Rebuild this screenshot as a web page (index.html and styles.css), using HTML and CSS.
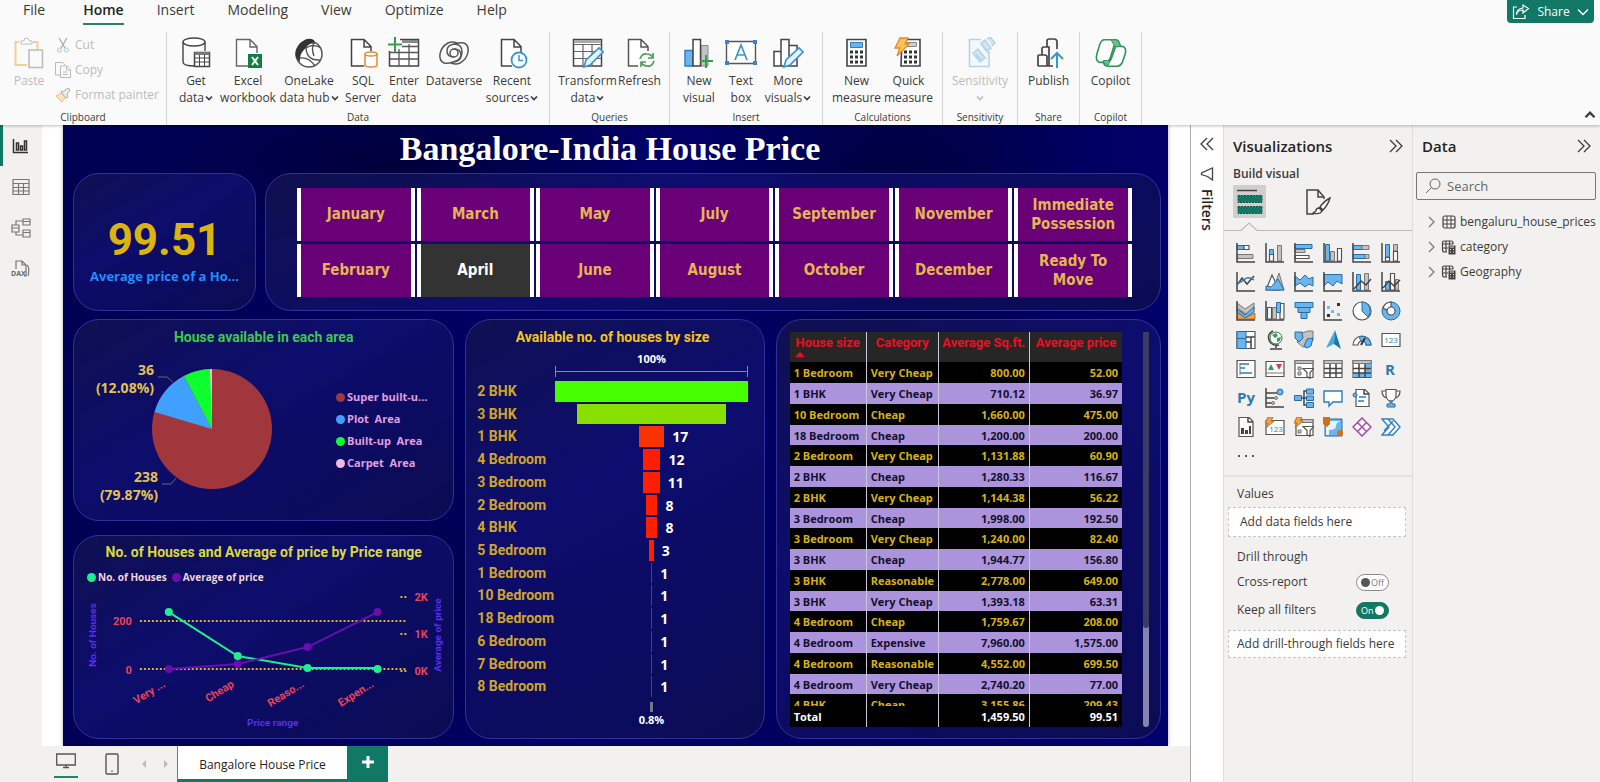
FILE: index.html
```html
<!DOCTYPE html>
<html lang="en">
<head>
<meta charset="utf-8">
<title>Bangalore House Price</title>
<link rel="stylesheet" href="styles.css">
</head>
<body>
<svg class="defs" aria-hidden="true">
  <symbol id="down" viewBox="0 0 8 8"><path d="M1 2.500 4 5.500 7 2.500" fill="none" stroke="currentColor" stroke-width="1.600"/></symbol>
  <symbol id="next" viewBox="0 0 16 16"><path d="M2 2l6 6-6 6M8 2l6 6-6 6" fill="none" stroke="currentColor" stroke-width="1.300"/></symbol>
  <symbol id="right" viewBox="0 0 12 12"><path d="M3 1l5 5-5 5" fill="none" stroke="currentColor" stroke-width="1.200"/></symbol>
  <symbol id="calcgrid" viewBox="0 0 16 16"><path d="M6 13H3.500Q1.500 13 1.500 11V4Q1.500 2 3.500 2H10Q12 2 12 4V5M1.500 5H12M1.500 9H7M5 2V13M8.500 2V6" fill="none" stroke="#444" stroke-width="1.200"/><path d="M7.500 6.500h7v9h-7z" fill="#444"/><path d="M9 8h4M9 10.500h1M12 10.500h1M9 13h1M12 13h1" stroke="#ddd"/></symbol>
</svg>

<header class="ribbon">
  <nav class="tabs">
    <button class="tab">File</button>
    <button class="tab active">Home</button>
    <button class="tab">Insert</button>
    <button class="tab">Modeling</button>
    <button class="tab">View</button>
    <button class="tab">Optimize</button>
    <button class="tab">Help</button>
    <button class="share"><svg width="18" height="16" viewBox="0 0 18 16"><path d="M5 3H1.500V14.500H13V11M4.500 11Q5 6 11 6V9l5.500-4.500L11 1V4Q4.500 4.500 4.500 11Z" fill="none" stroke="#fff" stroke-width="1.200"/></svg>Share<svg width="12" height="12" viewBox="0 0 12 12"><path d="M1 3.500l5 5 5-5" fill="none" stroke="#fff" stroke-width="1.300"/></svg></button>
  </nav>
  <div class="tools">
    <section class="group clipboard">
      <div class="items">
        <button class="tool paste" disabled><svg class="big" viewBox="0 0 32 32"><path d="M6 5H2.500V28H14M20 5h4.500V12" fill="none" stroke="#f3cf97" stroke-width="2"/><path d="M8 7V4h3q0-3 2.500-3T16 4h3V7Z" fill="#fff" stroke="#bbb"/><path d="M16 13H29.500V30.500H16Z" fill="#fafafa" stroke="#bbb" stroke-width="1.500"/></svg><span>Paste</span></button>
        <div class="clips">
          <button disabled><svg width="16" height="16" viewBox="0 0 16 16"><path d="M4 1l6 10M12 1L6 11" stroke="#aaa" stroke-width="1.300"/><circle cx="4.500" cy="13" r="2" fill="none" stroke="#a5c8e0"/><circle cx="11.500" cy="13" r="2" fill="none" stroke="#a5c8e0"/></svg>Cut</button>
          <button disabled><svg width="16" height="16" viewBox="0 0 16 16"><path d="M5 13H.5V.5H8L10 3M5.500 4H12l3.500 3.500V15.500H5.500ZM11.500 4V8h4M8 10h4M8 12.500h5" fill="none" stroke="#bbb"/></svg>Copy</button>
          <button disabled><svg width="16" height="16" viewBox="0 0 16 16"><path d="M1 9l6-3 4 4-4 5Z" fill="#fbe3c0" stroke="#eac28a"/><path d="M6 5l5 6 2-1-1-3 3-4-2-2-4 3Z" fill="#eee" stroke="#aaa"/></svg>Format painter</button>
        </div>
      </div>
      <h2>Clipboard</h2>
    </section>
    <section class="group data">
      <div class="items">
        <button class="tool w50"><svg class="big" viewBox="0 0 32 32"><path d="M3 5V25q0 4 12 4M25 5v9" fill="none" stroke="#444" stroke-width="1.400"/><ellipse cx="14" cy="5" rx="11" ry="4" fill="#fff" stroke="#444" stroke-width="1.400"/><path d="M14.500 15.500h15v14h-15z" fill="#fff" stroke="#444" stroke-width="1.500"/><path d="M14.500 16.500h15" stroke="#777" stroke-width="3"/><path d="M14.500 21h15M14.500 25h15M19.500 18v11M24.500 18v11" stroke="#444"/></svg><span>Get<br>data<svg class="dd"><use href="#down"/></svg></span></button>
        <button class="tool w54"><svg class="big" viewBox="0 0 32 32"><path d="M16 29H4.500V2.500H18L25 9.500V16M18 2.500V10h7" fill="#fff" stroke="#666" stroke-width="1.400"/><rect x="16" y="17" width="14" height="14" fill="#138043"/><path d="M20 20l6 8M26 20l-6 8" stroke="#fff" stroke-width="2"/></svg><span>Excel<br>workbook</span></button>
        <button class="tool w68"><svg class="big" viewBox="0 0 32 32"><circle cx="16" cy="17" r="13" fill="#fff" stroke="#555" stroke-width="1.500"/><path d="M10 4Q15 0 21 3L22 7Q16 5 13 11 6 16 7 25-1 18 5 10 6 6 10 4Z" fill="#333"/><path d="M13 11Q14 24 27 23M13 11Q20 6 28 11M7 21Q16 20 22 29M21 5Q18 12 21 19" fill="none" stroke="#555" stroke-width="1.400"/></svg><span>OneLake<br>data hub<svg class="dd"><use href="#down"/></svg></span></button>
        <button class="tool w40"><svg class="big" viewBox="0 0 32 32"><path d="M17 29H4.500V2.500H17L24 9.500V14M17 2.500V10h7" fill="#fff" stroke="#444" stroke-width="1.500"/><path d="M18 17V28q0 2 6 2t6-2V17" fill="#fff" stroke="#e28a3b" stroke-width="1.500"/><ellipse cx="24" cy="17" rx="6" ry="2" fill="#fff" stroke="#e28a3b" stroke-width="1.500"/></svg><span>SQL<br>Server</span></button>
        <button class="tool w42"><svg class="big" viewBox="0 0 32 32"><path d="M12 2.500H30.500V29H1.500V14" fill="#fff" stroke="#444" stroke-width="1.500"/><path d="M14 4.500h16" stroke="#888" stroke-width="3"/><path d="M14 9.500h17M10 15.500h21M2 22h29M11 12v17M21 7v22M2 15.500h9" stroke="#555" stroke-width="1.300"/><path d="M7 0V15M0 7.500H14" stroke="#35a04c" stroke-width="2"/></svg><span>Enter<br>data</span></button>
        <button class="tool w58"><svg class="big" viewBox="0 0 32 32"><g fill="none" stroke="#555" stroke-width="1.500"><circle cx="16" cy="16" r="4"/><path d="M16 20Q9 20 9 14T16 7Q24 7 24 15T15 25Q10 27 6 26 1 24 2 17T10 6Q14 4 19 6"/><path d="M16 12Q23 12 23 18T16 25M17 7Q22 5 26 6 31 8 30 15T22 26Q18 28 13 26"/></g></svg><span>Dataverse</span></button>
        <button class="tool w58"><svg class="big" viewBox="0 0 32 32"><path d="M16 29H5.500V2.500H18L25 9.500V15M18 2.500V10h7" fill="#fff" stroke="#444" stroke-width="1.500"/><circle cx="23" cy="23" r="7.500" fill="#fff" stroke="#3c94d4" stroke-width="1.800"/><path d="M23 18V23.500h4" fill="none" stroke="#3c94d4" stroke-width="1.500"/></svg><span>Recent<br>sources<svg class="dd"><use href="#down"/></svg></span></button>
      </div>
      <h2>Data</h2>
    </section>
    <section class="group g120">
      <div class="items">
        <button class="tool w60"><svg class="big" viewBox="0 0 32 32"><path d="M1.500 2.500H29.500V29H1.500Z" fill="#fff" stroke="#444" stroke-width="1.500"/><path d="M2 4.500h27" stroke="#aaa" stroke-width="3"/><path d="M1.500 7.500h28M2 14.500h27M2 21.500h27M11 8v21M20 8v21" stroke="#666" stroke-width="1.200"/><path d="M12 30l2-7L27 11l4 4-13 13Z" fill="#e7f3fc" stroke="#3c94d4" stroke-width="1.700"/></svg><span>Transform<br>data<svg class="dd"><use href="#down"/></svg></span></button>
        <button class="tool w44"><svg class="big" viewBox="0 0 32 32"><path d="M14 29H4.500V2.500H17L24 9.500V14M17 2.500V10h7" fill="#fff" stroke="#555" stroke-width="1.500"/><path d="M16 22q2-6 7-5 4 0 6 4M29 16v5h-5M30 24q-2 6-7 5-4 0-6-4M17 30v-5h5" fill="none" stroke="#49a35a" stroke-width="1.700"/></svg><span>Refresh</span></button>
      </div>
      <h2>Queries</h2>
    </section>
    <section class="group insert">
      <div class="items">
        <button class="tool w40"><svg class="big" viewBox="0 0 32 32"><path d="M2 13.500h8V29H2z" fill="#6bb5ee" stroke="#2b7cc0" stroke-width="1.400"/><path d="M18 8.500h7V29h-7z" fill="#c4c4c4" stroke="#888"/><path d="M10 2.500h7.500V29H10z" fill="#fff" stroke="#444" stroke-width="1.500"/><path d="M23 18V31M17 24H30" stroke="#35a04c" stroke-width="2"/></svg><span>New<br>visual</span></button>
        <button class="tool w44"><svg class="big" viewBox="0 0 32 32"><path d="M1.500 4.500h29v22h-29z" fill="#fff" stroke="#555" stroke-width="1.400"/><path d="M10 23l6-15 6 15M12 18h8" fill="none" stroke="#3c94d4" stroke-width="1.700"/><path d="M0 3h4v4H0zM28 3h4v4h-4zM0 24h4v4H0zM28 24h4v4h-4z" fill="#3c84c4"/></svg><span>Text<br>box</span></button>
        <button class="tool w50"><svg class="big" viewBox="0 0 32 32"><path d="M2 14.500h7V29H2zM9 2.500h8V29H9zM17 8.500h8V29h-8z" fill="#fff" stroke="#444" stroke-width="1.500"/><path d="M12 30l2-7L27 11l4 4-13 13Z" fill="#e7f3fc" stroke="#3c94d4" stroke-width="1.700"/></svg><span>More<br>visuals<svg class="dd"><use href="#down"/></svg></span></button>
      </div>
      <h2>Insert</h2>
    </section>
    <section class="group g120">
      <div class="items">
        <button class="tool w52"><svg class="big" viewBox="0 0 32 32"><path d="M6 2.500H25V29H6Z" fill="#fff" stroke="#444" stroke-width="1.600"/><path d="M9.500 5.500h12v5h-12z" fill="#6bb5ee" stroke="#2b7cc0"/><path d="M9 15h3M14 15h3M19 15h3M9 20h3M14 20h3M19 20h3M9 25h3M14 25h3M19 25h3" stroke="#333" stroke-width="3"/></svg><span>New<br>measure</span></button>
        <button class="tool w52"><svg class="big" viewBox="0 0 32 32"><path d="M9 2.500H27V29H8Z" fill="#fff" stroke="#444" stroke-width="1.600"/><path d="M13.500 5.500h10v4h-10z" fill="#ccc" stroke="#888"/><path d="M11 15h3M16 15h3M21 15h3M11 20h3M16 20h3M21 20h3M11 25h3M16 25h3M21 25h3" stroke="#333" stroke-width="3"/><path d="M7 1h8l-3 6h4L4 19 7 11H2Z" fill="#fcc25c" stroke="#e28a2b" stroke-width="1.300"/></svg><span>Quick<br>measure</span></button>
      </div>
      <h2>Calculations</h2>
    </section>
    <section class="group g75">
      <div class="items">
        <button class="tool" disabled><svg class="big" viewBox="0 0 32 32"><path d="M17 2.500H5.500V29.500H25V14" fill="#f2f8fc" stroke="#b4d3e8" stroke-width="1.500"/><path d="M9 16l5-4 7 9-5 4ZM12 17l5 6M17 6l4-3 6 8-4 3ZM23 2l3-2 5 6-3 3M17 7l7 9" fill="#d3e6f3" stroke="#b4d3e8" stroke-width="1.500"/></svg><span>Sensitivity<br><svg class="dd"><use href="#down"/></svg></span></button>
      </div>
      <h2>Sensitivity</h2>
    </section>
    <section class="group g62">
      <div class="items">
        <button class="tool"><svg class="big" viewBox="0 0 32 32"><path d="M5 28.500V19q0-1 1-1h6q2 0 2 2v8.500Q14 29 12 29H6Q5 29 5 28.500ZM9 18V12q0-2 2-2h5V29M14 10V4q0-2 2-2h5q3 0 3 3V12M12 29h8" fill="none" stroke="#444" stroke-width="1.700"/><path d="M24 31V16M18 22l6-6 6 6" fill="none" stroke="#3c94d4" stroke-width="2"/></svg><span>Publish</span></button>
      </div>
      <h2>Share</h2>
    </section>
    <section class="group g62">
      <div class="items">
        <button class="tool"><svg class="big" viewBox="0 0 34 32"><path d="M10 2H22q3 0 4 4l1 3H20L16 22q-2 4-5 4H5Q0 25 2 17L5 7Q7 2 10 2Z" fill="#fff" stroke="#2c9458" stroke-width="1.700"/><path d="M24 30H13q-3 0-4-4H13q3 0 5-6l4-11h6q6 0 4 8l-3 9q-2 4-5 4Z" fill="#fff" stroke="#2c9458" stroke-width="1.700"/><path d="M17 2h5q3 0 4 4l1 3H21ZM9 24h7l-2 5q-4 0-5-5Z" fill="#6fbf8e" stroke="#2c9458"/></svg><span>Copilot</span></button>
      </div>
      <h2>Copilot</h2>
    </section>
    <button class="collapse" aria-label="Collapse ribbon"><svg width="12" height="12"><use href="#down"/></svg></button>
  </div>
</header>

<main class="workspace">
  <nav class="rail">
    <button class="current" aria-label="Report view"><svg width="18" height="18" viewBox="0 0 18 18"><path d="M1.500 2V15.500H16M4.500 6h2v7h-2zM8.500 9h2v4h-2zM12.500 4h2v9h-2z" fill="none" stroke="#333" stroke-width="1.500"/></svg></button>
    <button aria-label="Table view"><svg width="18" height="18" viewBox="0 0 18 18"><path d="M1 1.500h16v15H1zM1 5.500h16M1 9.500h16M1 13h16M6.500 5v11M11.500 5v11" fill="none" stroke="#777" stroke-width="1.200"/></svg></button>
    <button aria-label="Model view"><svg width="20" height="20" viewBox="0 0 20 20"><path d="M1 7h7v7H1zM1 10h7M12 1h7v6h-7zM12 3.500h7M12 12h7v7h-7zM12 14.500h7M5 7V3h7M5 14v3h7" fill="none" stroke="#777" stroke-width="1.200"/></svg></button>
    <button aria-label="DAX query view"><svg width="20" height="20" viewBox="0 0 20 20"><path d="M5 10V2h6l4 4v11H13M11 2v4h4M16 6q3 2 1 11" fill="none" stroke="#777" stroke-width="1.200"/><text x="0" y="17" class="dax">DAX</text></svg></button>
  </nav>

  <div class="stage">
    <div class="report">
      <h1>Bangalore-India House Price</h1>
      <div class="row top">
        <section class="card kpi"><strong>99.51</strong><span>Average price of a Ho...</span></section>
        <section class="card slicer">
          <button>January</button><button>March</button><button>May</button><button>July</button><button>September</button><button>November</button><button>Immediate Possession</button>
          <button>February</button><button class="picked" aria-pressed="true">April</button><button>June</button><button>August</button><button>October</button><button>December</button><button>Ready To Move</button>
        </section>
      </div>
      <div class="row bottom">
        <div class="left">
          <section class="card pie">
            <h3>House available in each area</h3>
            <div class="piebody">
              <svg viewBox="0 0 256 170">
                <circle cx="138" cy="80" r="60" fill="#a0373c"/>
                <path d="M138 80 80.500 63A60 60 0 0 1 110 27Z" fill="#3fa0ff"/>
                <path d="M138 80 110 27A60 60 0 0 1 137 20Z" fill="#0dff2d"/>
                <path d="M138 80 136 20H138Z" fill="#f5b8dd"/>
                <path d="M84 28h9l6 5M88 135h9l5-6" fill="none" stroke="#66666f"/>
                <g class="pielabel"><text x="80" y="26">36</text><text x="80" y="44">(12.08%)</text><text x="84" y="133">238</text><text x="84" y="151">(79.87%)</text></g>
              </svg>
              <ul>
                <li><i class="dot brick"></i>Super built-u...</li>
                <li><i class="dot sky"></i>Plot&nbsp; Area</li>
                <li><i class="dot lime"></i>Built-up&nbsp; Area</li>
                <li><i class="dot rose"></i>Carpet&nbsp; Area</li>
              </ul>
            </div>
          </section>
          <section class="card line">
            <h3>No. of Houses and Average of price by Price range</h3>
            <ul><li><i class="dot mint"></i>No. of Houses</li><li><i class="dot violet"></i>Average of price</li></ul>
            <svg viewBox="0 0 380 150">
              <g stroke="#d8b43c" stroke-width="2" stroke-dasharray="2 2"><path d="M66 34H332M66 82H332M327 10h7M327 47h7M327 84h7"/></g>
              <g fill="none" stroke-width="2"><path d="M95 25 164 69 234 81H304" stroke="#1ef08c"/><path d="M95 82 164 77 234 60 304 25" stroke="#6a0dad"/></g>
              <g fill="#1ef08c"><circle cx="95" cy="25" r="4"/><circle cx="164" cy="69" r="4"/><circle cx="234" cy="81" r="4"/><circle cx="304" cy="82" r="4"/></g>
              <g fill="#6a0dad"><circle cx="95" cy="82" r="4"/><circle cx="164" cy="77" r="4"/><circle cx="234" cy="60" r="4"/><circle cx="304" cy="25" r="4"/></g>
              <g class="ticks"><text x="58" y="38" text-anchor="end">200</text><text x="58" y="87" text-anchor="end">0</text><text x="341" y="14">2K</text><text x="341" y="51">1K</text><text x="341" y="88">0K</text>
              <g text-anchor="end"><text transform="translate(92 99) rotate(-32)">Very ...</text><text transform="translate(161 99) rotate(-32)">Cheap</text><text transform="translate(231 99) rotate(-32)">Reaso...</text><text transform="translate(301 99) rotate(-32)">Expen...</text></g></g>
              <g class="axis" text-anchor="middle"><text transform="translate(22 48) rotate(-90)">No. of Houses</text><text transform="translate(368 48) rotate(-90)">Average of price</text><text x="199" y="139">Price range</text></g>
            </svg>
          </section>
        </div>

        <section class="card funnel">
          <h3>Available no. of houses by size</h3>
          <div class="scale">100%</div>
          <div class="bracket"></div>
          <ol>
            <li><span>2 BHK</span><div><i class="f1" style="width:100%"></i><b></b></div></li>
            <li><span>3 BHK</span><div><i class="f2" style="width:78%"></i><b></b></div></li>
            <li><span>1 BHK</span><div><i class="f3" style="width:13.200%"></i><b>17</b></div></li>
            <li><span>4 Bedroom</span><div><i style="width:9.300%"></i><b>12</b></div></li>
            <li><span>3 Bedroom</span><div><i style="width:8.500%"></i><b>11</b></div></li>
            <li><span>2 Bedroom</span><div><i style="width:6.200%"></i><b>8</b></div></li>
            <li><span>4 BHK</span><div><i style="width:6.200%"></i><b>8</b></div></li>
            <li><span>5 Bedroom</span><div><i style="width:2.300%"></i><b>3</b></div></li>
            <li><span>1 Bedroom</span><div><i class="thin" style="width:0.800%"></i><b>1</b></div></li>
            <li><span>10 Bedroom</span><div><i class="thin" style="width:0.800%"></i><b>1</b></div></li>
            <li><span>18 Bedroom</span><div><i class="thin" style="width:0.800%"></i><b>1</b></div></li>
            <li><span>6 Bedroom</span><div><i class="thin" style="width:0.800%"></i><b>1</b></div></li>
            <li><span>7 Bedroom</span><div><i class="thin" style="width:0.800%"></i><b>1</b></div></li>
            <li><span>8 Bedroom</span><div><i class="thin" style="width:0.800%"></i><b>1</b></div></li>
          </ol>
          <div class="stem"></div>
          <div class="scale">0.8%</div>
        </section>

        <section class="card tablecard">
          <table>
            <thead><tr><th>House size<svg class="sort" viewBox="0 0 10 5"><path d="M0 5 5 0 10 5Z" fill="#e81123"/></svg></th><th>Category</th><th>Average Sq.ft.</th><th>Average price</th></tr></thead>
            <tbody>
              <tr><td>1 Bedroom</td><td>Very Cheap</td><td>800.00</td><td>52.00</td></tr>
              <tr><td>1 BHK</td><td>Very Cheap</td><td>710.12</td><td>36.97</td></tr>
              <tr><td>10 Bedroom</td><td>Cheap</td><td>1,660.00</td><td>475.00</td></tr>
              <tr><td>18 Bedroom</td><td>Cheap</td><td>1,200.00</td><td>200.00</td></tr>
              <tr><td>2 Bedroom</td><td>Very Cheap</td><td>1,131.88</td><td>60.90</td></tr>
              <tr><td>2 BHK</td><td>Cheap</td><td>1,280.33</td><td>116.67</td></tr>
              <tr><td>2 BHK</td><td>Very Cheap</td><td>1,144.38</td><td>56.22</td></tr>
              <tr><td>3 Bedroom</td><td>Cheap</td><td>1,998.00</td><td>192.50</td></tr>
              <tr><td>3 Bedroom</td><td>Very Cheap</td><td>1,240.00</td><td>82.40</td></tr>
              <tr><td>3 BHK</td><td>Cheap</td><td>1,944.77</td><td>156.80</td></tr>
              <tr><td>3 BHK</td><td>Reasonable</td><td>2,778.00</td><td>649.00</td></tr>
              <tr><td>3 BHK</td><td>Very Cheap</td><td>1,393.18</td><td>63.31</td></tr>
              <tr><td>4 Bedroom</td><td>Cheap</td><td>1,759.67</td><td>208.00</td></tr>
              <tr><td>4 Bedroom</td><td>Expensive</td><td>7,960.00</td><td>1,575.00</td></tr>
              <tr><td>4 Bedroom</td><td>Reasonable</td><td>4,552.00</td><td>699.50</td></tr>
              <tr><td>4 Bedroom</td><td>Very Cheap</td><td>2,740.20</td><td>77.00</td></tr>
              <tr><td>4 BHK</td><td>Cheap</td><td>3,155.86</td><td>209.43</td></tr>
            </tbody>
            <tfoot><tr><td>Total</td><td></td><td>1,459.50</td><td>99.51</td></tr></tfoot>
          </table>
          <div class="scroll"><div></div></div>
        </section>
      </div>
    </div>
    <footer class="pages">
      <button class="device on" aria-label="Desktop layout"><svg width="20" height="16" viewBox="0 0 20 16"><path d="M.700 1h18.600v11H.700zM7 14.500h6M10 12v2" fill="none" stroke="#555" stroke-width="1.300"/></svg></button>
      <button class="device" aria-label="Mobile layout"><svg width="14" height="22" viewBox="0 0 14 22"><rect x="1" y="1" width="12" height="20" rx="1" fill="none" stroke="#555" stroke-width="1.400"/><path d="M6 18h2" stroke="#555"/></svg></button>
      <button class="step" aria-label="Previous page"><svg width="6" height="8" viewBox="0 0 6 8"><path d="M5 0V8L1 4Z" fill="#bbb"/></svg></button>
      <button class="step" aria-label="Next page"><svg width="6" height="8" viewBox="0 0 6 8"><path d="M1 0V8L5 4Z" fill="#bbb"/></svg></button>
      <button class="page">Bangalore House Price</button>
      <button class="add" aria-label="Add page"><svg width="12" height="12" viewBox="0 0 12 12"><path d="M6 0V12M0 6H12" stroke="#fff" stroke-width="3"/></svg></button>
    </footer>
  </div>

  <aside class="filters">
    <button aria-label="Expand filters"><svg class="flip" width="16" height="16"><use href="#next"/></svg></button>
    <svg width="14" height="14" viewBox="0 0 14 14"><path d="M12.500 1V13L7.500 9.500 1.500 7.500V6L12.500 1Z" fill="none" stroke="#444" stroke-width="1.300"/></svg>
    <h2>Filters</h2>
  </aside>

  <aside class="viz">
    <div class="head"><h2>Visualizations</h2><button aria-label="Collapse"><svg width="16" height="16"><use href="#next"/></svg></button></div>
    <h4>Build visual</h4>
    <div class="modes">
      <button class="on" aria-label="Build"><svg width="26" height="26" viewBox="0 0 26 26"><path d="M0 1.500h20" stroke="#444" stroke-width="1.500"/><path d="M1 6.500h24v7H1zM1 17.500h24v7H1z" fill="#117865" stroke="#1b4e42" stroke-dasharray="2 1"/></svg></button>
      <button aria-label="Format"><svg width="26" height="26" viewBox="0 0 26 26"><path d="M8 25H1V1H12l6 7V10M12 1V8h6" fill="none" stroke="#444" stroke-width="1.500"/><path d="M24 9Q18 12 14 18l3 3Q22 16 24 9ZM13 19q-3 0-3 3l-3 2q7 2 9-2Z" fill="#fff" stroke="#444" stroke-width="1.400"/></svg></button>
    </div>
    <svg class="notch" viewBox="0 0 189 9" preserveAspectRatio="xMinYMin slice"><path d="M0 8.500H17L25 1l8 7.500H600" fill="none" stroke="#bbb" stroke-width="1.200"/></svg>
    <div class="gallery">
      <svg viewBox="0 0 20 20"><path class="b" d="M1 2.500h7v4H1z"/><path class="w" d="M8 2.500h5v4H8z"/><path class="g" d="M1 11.500h16v4H1z"/><path class="x" d="M1 0V19H19"/></svg>
      <svg viewBox="0 0 20 20"><path class="w" d="M4.500 10.500h4V18h-4z"/><path class="b" d="M4.500 6.500h4v5h-4z"/><path class="g" d="M12.500 2.500h4V18h-4z"/><path class="x" d="M1 0V19H19"/></svg>
      <svg viewBox="0 0 20 20"><path class="b" d="M1 1.500h17v4H1z"/><path class="g" d="M1 6.500h10v3H1z"/><path class="w" d="M1 12.500h14v3H1z"/><path class="x" d="M1 0V19H19"/></svg>
      <svg viewBox="0 0 20 20"><path class="b" d="M2.500 1.500h4V18h-4z"/><path class="g" d="M7.500 8.500h4V18h-4z"/><path class="w" d="M14.500 5.500h4V18h-4z"/><path class="x" d="M1 0V19H19"/></svg>
      <svg viewBox="0 0 20 20"><path class="b" d="M1 2.500h9v4H1zM1 11.500h12v4H1z"/><path class="g" d="M10 2.500h7v4h-7zM13 11.500h4v4h-4z"/><path class="x" d="M1 0V19H19"/></svg>
      <svg viewBox="0 0 20 20"><path class="b" d="M4.500 1.500h4V14h-4z"/><path class="w" d="M4.500 14.500h4V18h-4z"/><path class="g" d="M12.500 1.500h4V8h-4z"/><path class="w" d="M12.500 8.500h4V18h-4z"/><path class="x" d="M1 0V19H19"/></svg>

      <svg viewBox="0 0 20 20"><path class="x" d="M1 0V19H19M2 12l4-6 5 6 7-8"/><path class="l" d="M2 11q4-1 7-4t9 1"/></svg>
      <svg viewBox="0 0 20 20"><path class="g" d="M8 18 14 1 19 18Z"/><path class="w" d="M1 18 7 3l7 15Z"/><path class="b" d="M1 18v-4l5 1 7-8 6 11Z"/></svg>
      <svg viewBox="0 0 20 20"><path class="b" d="M1 4l5 4 5-5 4 4 4-2v9l-4-2-4 3-5-4-5 3Z"/><path class="x" d="M1 0V19H19"/></svg>
      <svg viewBox="0 0 20 20"><path class="b" d="M1 2.500h18V12l-5-3-4 5-5-4-4 4Z"/><path class="x" d="M1 0V19H19"/></svg>
      <svg viewBox="0 0 20 20"><path class="b" d="M4.500 2.500h4V18h-4z"/><path class="g" d="M12.500 1.500h4V18h-4z"/><path class="x" d="M1 0V19H19M2 17l7-8 5 4 5-6"/></svg>
      <svg viewBox="0 0 20 20"><path class="b" d="M4.500 9.500h4V18h-4z"/><path class="w" d="M9.500 1.500h4V18h-4z"/><path class="g" d="M14.500 7.500h3V18h-3z"/><path class="x" d="M1 0V19H19M2 16l6-7 5 5 6-6"/></svg>

      <svg viewBox="0 0 20 20"><path class="o" d="M1 13l5-3 5 6 8-4v6H1Z"/><path class="g" d="M1 2l8 6 9-6v7l-8 4-9-6Z"/><path class="b" d="M1 8l8 6 9-8v5l-9 6-8-6Z"/><path class="x" d="M1 0V19H19"/></svg>
      <svg viewBox="0 0 20 20"><path class="w" d="M2.500 6.500h4V18h-4zM15 2.500h4V18h-4z"/><path class="g" d="M7.500 6.500h4V18h-4z"/><path class="b" d="M11.500 1.500h4v10h-4z"/><path class="x" d="M1 0V19H19"/></svg>
      <svg viewBox="0 0 20 20"><path class="b" d="M1 1.500h18v5H1zM4 6.500h12v5H4zM7 11.500h6v6H7z"/></svg>
      <svg viewBox="0 0 20 20"><path class="x" d="M1 0V19H19"/><path d="M14 2h3v3h-3zM4 13h3v3H4z" fill="#333"/><path d="M4 5h3v3H4zM8 9h3v3H8zM14 12h3v3h-3z" fill="#7ab8e0"/></svg>
      <svg viewBox="0 0 20 20"><circle class="w" cx="10" cy="10" r="9"/><path class="b" d="M10 1A9 9 0 0 1 16 16L10 10Z"/></svg>
      <svg viewBox="0 0 20 20"><circle class="b" cx="10" cy="10" r="9"/><path class="w" d="M2 7A9 9 0 0 1 10 1V6L6 9Z"/><circle class="w" cx="10" cy="10" r="4"/></svg>

      <svg viewBox="0 0 20 20"><path class="w" d="M1 1.500h18v17H1z"/><path class="b" d="M1 1.500h9v17H1zM1 8.500h9"/><path class="x" d="M10 7h9M15 7v11M10 12h5"/></svg>
      <svg viewBox="0 0 20 20"><circle cx="11" cy="8" r="6" fill="#fff" stroke="#2f7d46"/><path d="M7 5l4-2 2 3-3 2ZM12 8l4-1-1 4-3 1Z" fill="#3b9b57"/><path class="x" d="M8 1Q2 4 4 10T14 15M11 15v3M5 19h12"/></svg>
      <svg viewBox="0 0 20 20"><path class="g" d="M8 3l6-2h5v9l-5 7H9l-6-5Z"/><path class="b" d="M1 2h7l1 6-4 4-4-4ZM13 9l6-1-2 8-4 2-3-2Z"/></svg>
      <svg viewBox="0 0 20 20"><path d="M12 0 3 18l8-4Z" fill="#48a9d8"/><path d="M12 0l6 19-7-5Z" fill="#1878b0"/></svg>
      <svg viewBox="0 0 20 20"><path class="w" d="M1 15A9 9 0 0 1 19 15H14A4 4 0 0 0 6 15Z"/><path class="b" d="M7 7A9 9 0 0 1 19 15H14A4 4 0 0 0 9 11Z"/><path d="M9 15 13 8" stroke="#333" stroke-width="2"/></svg>
      <svg viewBox="0 0 20 20"><path class="w" d="M1 3.500h18v13H1z"/><text x="10" y="13" class="num">123</text></svg>

      <svg viewBox="0 0 20 20"><path class="w" d="M1 1.500h18v17H1z"/><path class="l" d="M4 5h9M4 9h5M4 14h12"/><path class="g" d="M4 4v12"/></svg>
      <svg viewBox="0 0 20 20"><path class="w" d="M1 2.500h18v15H1z"/><path d="M3 11 6 5l3 6Z" fill="#3b9b57"/><path d="M11 5h6l-3 6Z" fill="#d83b4b"/><path class="g" d="M1 14h18"/></svg>
      <svg viewBox="0 0 20 20"><path class="w" d="M1 1.500h18v17H1z"/><path class="g" d="M1 1.500h18v3H1zM4 8h3v3H4zM4 13h3v3H4z"/><path class="w" d="M9 9.500h11l-4 4v6l-3-2v-4Z"/></svg>
      <svg viewBox="0 0 20 20"><path class="w" d="M1 1.500h18v17H1z"/><path class="g" d="M1 1.500h18v3H1z"/><path class="x" d="M1 9.500h18M1 14h18M7 5v13M13 5v13"/></svg>
      <svg viewBox="0 0 20 20"><path class="w" d="M1 1.500h18v17H1z"/><path d="M13 5h6v13H1v-4h12Z" fill="#6bb5ee"/><path class="g" d="M1 1.500h18v3H1z"/><path class="x" d="M1 9.500h18M1 14h18M7 5v13M13 5v13"/></svg>
      <svg viewBox="0 0 20 20"><text x="9" y="16" class="letter">R</text></svg>

      <svg viewBox="0 0 20 20"><text x="10" y="15" class="letter">Py</text></svg>
      <svg viewBox="0 0 20 20"><path class="x" d="M1 0V19H19M1 5h12M1 10h9M1 15h6"/><circle class="b" cx="15" cy="4" r="3"/><circle class="g" cx="11" cy="10" r="1.500"/><circle class="g" cx="8" cy="15" r="1.500"/></svg>
      <svg viewBox="0 0 20 20"><path class="x" d="M7 10h6M13 3H10v14h3"/><path class="b" d="M.500 7.500h7v5h-7zM12.500 1h7v5h-7zM12.500 8h7v4.500h-7zM12.500 14.500h7v5h-7z"/></svg>
      <svg viewBox="0 0 20 20"><path d="M1 3h18v11H10l-4 4v-4H1Z" fill="#fff" stroke="#2b7cc0" stroke-width="1.400"/></svg>
      <svg viewBox="0 0 20 20"><path class="w" d="M4 1.500h9l4 4v13H4z"/><path class="x" d="M12 2v4h5"/><path class="l" d="M7 9h7M6 13h6"/><circle class="b" cx="3" cy="7" r="2"/></svg>
      <svg viewBox="0 0 20 20"><path class="w" d="M5 1.500H15V8q-1 5-5 5T5 8ZM5 3H1q0 6 5 7M15 3h4q0 6-5 7"/><path class="b" d="M9 13h2v3h3v3H6v-3h3Z"/></svg>

      <svg viewBox="0 0 20 20"><path class="w" d="M3 .500h10l4 4v15H3z"/><path class="x" d="M12 1v4h5"/><path d="M5 11h3v6H5zM9 13h3v4H9zM13 9h2v8h-2z" fill="#444"/></svg>
      <svg viewBox="0 0 20 20"><path class="w" d="M1 3.500h18v14H1z"/><text x="11" y="15" class="num">123</text><path class="o" d="M3 0h5L6 4h3L1 11 3 6H0Z"/></svg>
      <svg viewBox="0 0 20 20"><path class="w" d="M2 2.500h17v16H2z"/><path class="g" d="M8 2.500h11v3H8zM4 13h3v3H4z"/><path class="w" d="M9 9.500h11l-4 4v6l-3-2v-4Z"/><path class="o" d="M3 0h5L6 4h3L1 11 3 6H0Z"/></svg>
      <svg viewBox="0 0 20 20"><path class="b" d="M2 2h17v17H2z"/><path d="M18 4q-5 1-5 5t-7 4v5h-3V4Z" fill="#e6f3fb"/><path d="M0 0h7v7L4 10 0 7Z" fill="#d0711c"/><circle cx="17" cy="16" r="3" fill="#d0711c"/></svg>
      <svg viewBox="0 0 20 20"><path d="M10 1l9 9-9 9-9-9ZM5.500 5.500l9 9M14.500 5.500l-9 9" fill="#fff" stroke="#a646b0" stroke-width="1.500"/></svg>
      <svg viewBox="0 0 20 20"><path d="M1 2h11l7 8-7 8H1l7-8ZM7 2l7 8-7 8M3 14l9-10" fill="#fff" stroke="#2f80c8" stroke-width="1.400"/></svg>
      <button class="more" aria-label="More visuals"><svg viewBox="0 0 20 20"><path d="M2 9h2v2H2zM9 9h2v2H9zM16 9h2v2h-2z" fill="#555"/></svg></button>
    </div>
    <div class="fields">
      <p>Values</p>
      <div class="well">Add data fields here</div>
      <p class="drill">Drill through</p>
      <label class="option">Cross-report<span class="toggle"><input type="checkbox"><i></i><em>Off</em></span></label>
      <label class="option">Keep all filters<span class="toggle on"><input type="checkbox" checked><em>On</em><i></i></span></label>
      <div class="well tight">Add drill-through fields here</div>
    </div>
  </aside>

  <aside class="datapane">
    <div class="head"><h2>Data</h2><button aria-label="Collapse"><svg width="16" height="16"><use href="#next"/></svg></button></div>
    <label class="search"><svg width="16" height="16" viewBox="0 0 16 16"><circle cx="10" cy="6" r="5" fill="none" stroke="#666"/><path d="M6.500 9.500 1 15" stroke="#666"/></svg><input type="search" placeholder="Search" aria-label="Search"></label>
    <ul>
      <li><svg width="12" height="12"><use href="#right"/></svg><svg width="16" height="16" viewBox="0 0 16 16"><rect x="2" y="2" width="12" height="12" rx="2" fill="none" stroke="#444" stroke-width="1.200"/><path d="M2 6h12M2 10h12M6 2v12M10 2v12" stroke="#444"/></svg>bengaluru_house_prices</li>
      <li><svg width="12" height="12"><use href="#right"/></svg><svg width="16" height="16"><use href="#calcgrid"/></svg>category</li>
      <li><svg width="12" height="12"><use href="#right"/></svg><svg width="16" height="16"><use href="#calcgrid"/></svg>Geography</li>
    </ul>
  </aside>
</main>
</body>
</html>
```
FILE: styles.css
```css
* { box-sizing: border-box; }
html, body { margin: 0; height: 100%; }
body {
  display: flex; flex-direction: column; min-height: 100vh;
  font: 12px/16px "Open Sans", "Noto Sans", sans-serif; color: #3b3a39; background: #fff;
}
button { margin: 0; padding: 0; border: 0; background: none; font: inherit; color: inherit; }
h1, h2, h3, h4, p, ul, ol { margin: 0; padding: 0; list-style: none; font-weight: 400; }
svg { flex: none; }
.defs { display: none; }

/* ribbon */
.ribbon { background: #fafafa; height: 125px; flex: none; box-shadow: 0 1px 3px rgba(0,0,0,.25); position: relative; }
.tabs { display: flex; align-items: flex-start; gap: 33px; height: 32px; padding: 0 6px 0 23px; font-size: 14px; }
.tab { height: 25px; padding-bottom: 5px; line-height: 20px; border-bottom: 2px solid transparent; }
.tab:nth-child(2) { margin-left: 5px; }
.tab.active { font-weight: 600; border-color: #2a8069; color: #252423; }
.share { margin-left: auto; height: 23px; width: 87px; display: flex; align-items: center; justify-content: center; gap: 7px; background: #117865; color: #fff; font-size: 12px; border-radius: 0 0 4px 4px; }
.tools { display: flex; height: 93px; }
.group { display: flex; flex-direction: column; align-items: center; border-right: 1px solid #d6d5d4; padding-top: 5px; }
.group h2 { font-size: 10px; line-height: 14px; margin-top: auto; padding-bottom: 1px; }
.items { display: flex; align-items: flex-start; }
.clipboard { width: 167px; }
.clipboard .items { width: 100%; padding-left: 10px; }
.data { width: 383px; }
.data .items { width: 100%; padding-left: 4px; }
.g120 { width: 120px; }
.insert { width: 153px; }
.g75 { width: 75px; }
.g62 { width: 62px; }
.tool { display: flex; flex-direction: column; align-items: center; gap: 3px; line-height: 17px; white-space: nowrap; }
.tool:disabled, .clips button { color: #bdbcbb; }
.big { width: 32px; height: 32px; }
.dd { width: 8px; height: 8px; margin-left: 1px; }
.paste { width: 38px; }
.clips { display: flex; flex-direction: column; gap: 9px; padding-left: 7px; }
.clips button { display: flex; align-items: center; gap: 4px; line-height: 16px; white-space: nowrap; }
.w40 { width: 40px; } .w42 { width: 42px; } .w44 { width: 44px; } .w50 { width: 50px; } .w52 { width: 52px; }
.w54 { width: 54px; } .w58 { width: 58px; } .w60 { width: 60px; } .w68 { width: 68px; }
.collapse { margin: auto 4px 4px auto; transform: rotate(180deg); height: 12px; }

/* workspace */
.workspace { display: flex; flex: 1; min-height: 0; }
.rail { width: 42px; background: #f2f1f0; display: flex; flex-direction: column; flex: none; }
.rail button { height: 41px; display: flex; align-items: center; justify-content: center; }
.rail .current { border-left: 3px solid #117865; padding-right: 3px; }
.dax { font: 700 7px "Open Sans", sans-serif; fill: #666; }
.stage { flex: 1; min-width: 0; display: flex; flex-direction: column; }
.report {
  flex: 1; min-height: 0; margin: 0 22px 0 21px; padding: 0 7px 7px 10px;
  display: flex; flex-direction: column;
  box-shadow: 0 0 4px rgba(0,0,0,.3);
  background:
    radial-gradient(ellipse 260px 90px at 30% 6%, rgba(0,0,30,.55), transparent),
    radial-gradient(ellipse 200px 200px at 75% 12%, rgba(0,0,30,.5), transparent),
    radial-gradient(ellipse 200px 200px at 34% 75%, rgba(0,0,40,.35), transparent),
    linear-gradient(100deg, #000052, #000068 50%, #00005c 75%, #00006e);
}
.report h1 { height: 48px; padding-right: 14px; text-align: center; color: #fff; font: 700 34px/48px "Liberation Serif", serif; }
.row { display: grid; min-height: 0; }
.top { grid-template-columns: 183fr 896fr; gap: 9px; height: 138px; }
.bottom { grid-template-columns: 381fr 299fr 385fr; gap: 11px; flex: 1; margin-top: 8px; }
.card { border: 1px solid #30309a; border-radius: 26px; background: linear-gradient(150deg, rgba(18,18,80,.85), rgba(15,15,112,.85) 40%, rgba(13,13,95,.85) 75%, rgba(14,14,80,.85)); min-width: 0; min-height: 0; }
.card h3 { font: 700 14px/18px Roboto, sans-serif; text-align: center; white-space: nowrap; }
.kpi { display: flex; flex-direction: column; align-items: center; padding-top: 40px; }
.kpi strong { font: 700 44px/52px Roboto, sans-serif; color: #dcb40f; }
.kpi span { font-weight: 700; font-size: 13px; line-height: 20px; color: #1e8fff; }
.slicer { display: grid; grid-template: 1fr 1fr / repeat(7, 1fr); gap: 3px 2px; padding: 14px 28px 13px 31px; }
.slicer button { padding: 0 8px; background: #6a0078; border: solid #fff; border-width: 0 4px; color: #e3b553; font: 700 15px/19px "DejaVu Sans Condensed", "Noto Sans", sans-serif; }
.slicer .picked { background: #333; color: #fff; }

.left { display: flex; flex-direction: column; gap: 14px; min-height: 0; }
.pie { height: 202px; padding-top: 8px; }
.pie h3 { color: #3cc84b; }
.piebody { display: flex; }
.piebody svg { width: 256px; height: 170px; margin-top: 3px; }
.pielabel text { font: 700 14px "Open Sans", sans-serif; fill: #e3c152; text-anchor: end; }
.piebody ul { padding: 40px 0 0 6px; color: #e39ee0; font-weight: 700; font-size: 11px; }
.piebody li { display: flex; align-items: center; gap: 2px; height: 22px; white-space: nowrap; }
.dot { width: 9px; height: 9px; border-radius: 50%; }
.brick { background: #a0373c; } .sky { background: #3fa0ff; } .lime { background: #0dff2d; } .rose { background: #f5b8dd; }
.mint { background: #1ef08c; } .violet { background: #6a0dad; }
.line { flex: 1; padding-top: 7px; display: flex; flex-direction: column; }
.line h3 { color: #d8d83c; }
.line ul { display: flex; gap: 5px; padding: 7px 13px 0; font-weight: 700; font-size: 10px; color: #f3d5dc; }
.line li { display: flex; align-items: center; gap: 2px; line-height: 18px; }
.line svg { width: 100%; flex: 1; min-height: 0; }
.ticks text { font: 700 11px Roboto, sans-serif; fill: #e8435a; }
.axis text { font: 700 10px Roboto, sans-serif; fill: #5a2cf0; }

.funnel { padding: 8px 16px 11px 11px; display: flex; flex-direction: column; }
.funnel h3 { color: #f5c518; }
.scale { margin-left: 78px; text-align: center; color: #fff; font-weight: 700; font-size: 11px; line-height: 14px; }
.scale:nth-child(2) { margin-top: 6px; }
.bracket { margin: 0 0 4px 78px; height: 11px; border: solid #8888a0; border-width: 0 1px; background: linear-gradient(#8888a0, #8888a0) center / 100% 1px no-repeat; }
.funnel ol { flex: 1; display: grid; grid-auto-rows: 1fr; min-height: 0; }
.funnel li { display: flex; align-items: stretch; color: #cfa52a; font: 700 14px/20px Roboto, sans-serif; padding-bottom: 2px; min-height: 0; }
.funnel li > span { width: 78px; white-space: nowrap; flex: none; }
.funnel li div { flex: 1; display: flex; }
.funnel li div::before { content: ""; flex: 1 1 0; }
.funnel li i { background: #ff1e00; flex: none; }
.funnel li .f1 { background: #46ff00; }
.funnel li .f2 { background: #88e000; }
.funnel li .f3 { background: #f83200; }
.funnel li .thin { background: #b0183c; }
.funnel li b { flex: 1 1 0; width: 0; text-indent: 8px; color: #fff; font: 700 14px/22px "Open Sans", sans-serif; }
.stem { width: 3px; height: 10px; background: #77778c; margin: 3px 95px 1px auto; }

.tablecard { display: flex; gap: 21px; padding: 12px 11px 11px 13px; }
table { flex: 1; display: flex; flex-direction: column; min-height: 0; font-weight: 700; font-size: 11px; background: #000; }
thead, tbody, tfoot { display: block; }
tbody { flex: 1 1 0; min-height: 0; overflow: hidden; }
tr { display: grid; grid-template-columns: 76fr 72fr 91fr 93fr; height: 21px; }
tbody tr:nth-child(4n) { height: 20px; }
td { padding: 0 4px; line-height: 21px; border-left: 1px solid #c8c8d8; white-space: nowrap; color: #d6b016; }
td:first-child, th:first-child { border-left: 0; }
td:nth-child(n+3) { text-align: right; }
tbody tr:nth-child(even) { background: #ac94dc; }
tbody tr:nth-child(even) td { color: #12102c; }
thead tr { height: 30px; background: #262626; }
th { border-left: 1px solid #c8c8d8; padding: 2px 0; color: #e81123; font: 700 13px/18px Roboto, sans-serif; text-align: center; white-space: nowrap; }
.sort { display: block; width: 10px; height: 5px; margin-left: 5px; }
tfoot td { color: #fff; }
.scroll { width: 6px; background: #8484b0; border-radius: 3px; }
.scroll div { height: 75%; background: #3c3c62; border-radius: 3px; }

.pages { display: flex; height: 36px; background: #f2f1f0; }
.device { width: 42px; display: flex; align-items: center; justify-content: center; }
.device.on svg { margin-bottom: 3px; }
.device.on { box-shadow: inset 0 -2px #2a8069; width: 24px; margin: 0 13px 4px 12px; }
.step { width: 22px; }
.page { width: 170px; padding-top: 4px; background: #fff; border-bottom: 3px solid #117865; border-left: 1px solid #777; color: #252423; white-space: nowrap; }
.add { width: 41px; background: #117865; }

/* side panes */
.filters { width: 33px; border-left: 1px solid #aaa; display: flex; flex-direction: column; align-items: center; gap: 14px; padding-top: 11px; flex: none; }
.filters button { height: 16px; line-height: 0; }
.flip { transform: rotate(180deg); }
.filters svg:nth-child(2) { margin-top: 1px; }
.filters h2 { writing-mode: vertical-rl; font-size: 14px; font-weight: 600; line-height: 18px; margin-top: -6px; color: #252423; }
.viz { width: 189px; background: #f2f1f0; flex: none; border-left: 1px solid #e0dfde; }
.datapane { width: 188px; background: #f2f1f0; flex: none; border-left: 1px solid #dddcdb; }
.head { display: flex; align-items: center; justify-content: space-between; height: 42px; padding: 0 8px 0 9px; }
.head h2 { font-size: 15px; font-weight: 600; color: #252423; }
.head button { height: 16px; }
.viz h4 { padding: 0 9px; font-weight: 600; line-height: 14px; }
.modes { display: flex; gap: 36px; padding: 4px 9px 0; }
.modes button { width: 33px; height: 33px; line-height: 0; }
.modes .on { background: #d0cfce; }
.notch { display: block; width: 100%; height: 9px; margin-top: 4px; }
.gallery { display: grid; grid-template-columns: repeat(6, 20px); grid-auto-rows: 20px; justify-content: space-between; row-gap: 9px; padding: 12px 11px 0 12px; border-bottom: 2px solid #e4e3e2; height: 246px; }
.more { line-height: 0; }
.gallery svg { width: 20px; height: 20px; }
.b { fill: #6bb5ee; stroke: #2b6ca0; }
.g { fill: #c2c2c2; stroke: #777; }
.w { fill: #fff; stroke: #555; stroke-width: 1.200; }
.o { fill: #f2a24a; stroke: #c0701c; }
.x { fill: none; stroke: #444; stroke-width: 1.500; }
.l { fill: none; stroke: #2b7cc0; stroke-width: 1.500; }
.num { font: 8px "Open Sans", sans-serif; fill: #2b7cc0; text-anchor: middle; }
.letter { font: 700 15px "Open Sans", sans-serif; fill: #2b7cb0; text-anchor: middle; }
.fields { padding: 9px 6px 0 4px; }
.fields p { padding: 0 9px; }
.well { height: 30px; line-height: 28px; margin-top: 5px; border: 1px dashed #c8c6c4; background: #fff; padding: 0 11px; white-space: nowrap; }
.well.tight { height: 28px; line-height: 26px; padding: 0 8px; margin-top: 6px; }
.fields .drill { margin-top: 12px; padding-bottom: 3px; }
.option { display: flex; align-items: center; justify-content: space-between; height: 28px; padding: 0 17px 0 9px; }
.toggle { position: relative; display: flex; align-items: center; justify-content: space-between; width: 33px; height: 17px; padding: 0 4px; border: 1px solid #8a8886; border-radius: 9px; background: #fff; font-size: 9px; line-height: 15px; color: #777; }
.toggle input { position: absolute; inset: 0; margin: 0; appearance: none; }
.toggle i { width: 9px; height: 9px; border-radius: 50%; background: #555; }
.toggle em { font-style: normal; }
.toggle.on { background: #117865; border-color: #117865; color: #fff; }
.toggle.on i { background: #fff; }
.search { display: flex; align-items: center; gap: 6px; height: 28px; margin: 5px 4px 0 3px; padding: 0 8px; border: 1px solid #777; border-radius: 2px; }
.search input { border: 0; background: none; width: 100%; min-width: 0; font: 13px/18px "Open Sans", sans-serif; color: #555; outline: 0; padding: 0; }
.search input::placeholder { color: #666; }
.datapane ul { padding: 9px 0 0 13px; }
.datapane li { display: flex; align-items: center; height: 25px; gap: 3px; white-space: nowrap; }
.datapane li svg:first-child { color: #777; }
```
